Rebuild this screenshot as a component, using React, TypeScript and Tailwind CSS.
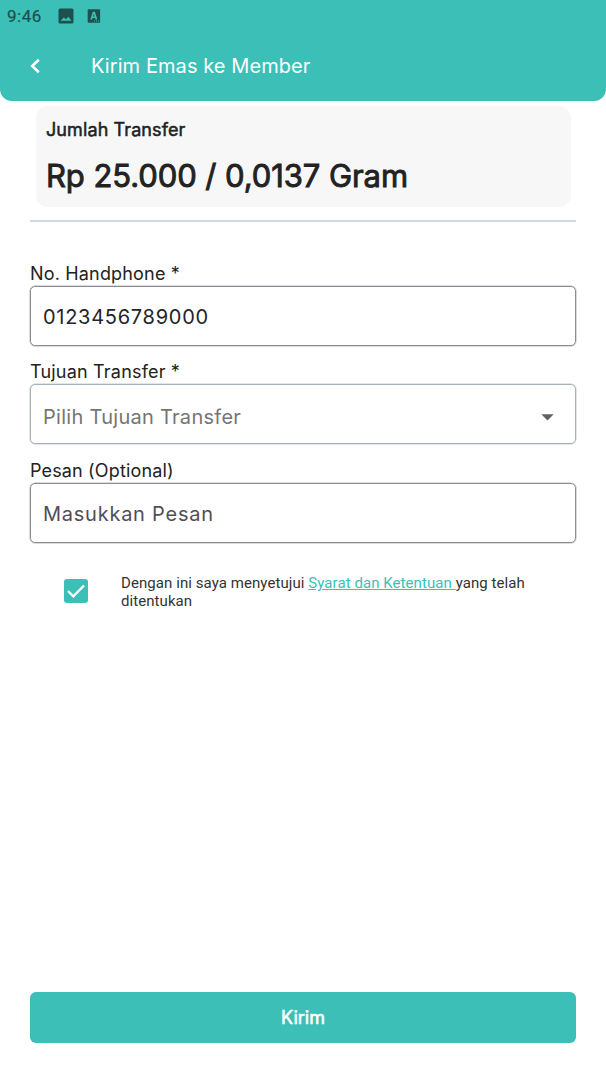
import { useState } from "react";

function StatusBar() {
  return (
    <div className="flex h-8 items-center pl-[7px] text-[#1c514e]">
      <span className="w-[37px] whitespace-nowrap font-['Roboto'] text-[17px] leading-8 tracking-[0.5px] [-webkit-text-stroke:0.2px]">
        9:46
      </span>
      <svg className="ml-[14px]" width="16" height="16" viewBox="0 0 16 16">
        <path
          fill="currentColor"
          fillRule="evenodd"
          d="M2 .5h12A1.500 1.500 0 0 1 15.500 2v12a1.500 1.500 0 0 1-1.500 1.500H2A1.500 1.500 0 0 1 .5 14V2A1.500 1.500 0 0 1 2 .5ZM2.600 12.800h10.800L10.300 8.800 8 11.300 5.800 9.600Z"
        />
      </svg>
      <svg className="ml-3" width="16" height="16" viewBox="0 0 16 16">
        <path
          fill="currentColor"
          fillRule="evenodd"
          d="M2.500 1.200h10.800a.8.8 0 0 1 .8.8v12a.8.8 0 0 1-.8.8H2.500a.8.8 0 0 1-.8-.8V2a.8.8 0 0 1 .8-.8ZM6.800 3.800 4.300 11.500h1.900l.5-1.600h2.300l.5 1.600h1.900L8.900 3.800ZM7.850 5.800l.7 2.600H7.150ZM8 12.500v1h1v-1ZM10 12.500v1h1v-1ZM12 12.500v1h1v-1Z"
        />
      </svg>
    </div>
  );
}

function Header() {
  return (
    <header className="h-[101px] rounded-b-xl bg-[#3bbfb7]">
      <StatusBar />
      <div className="flex h-[68px] items-center pl-[27px] text-white">
        <button type="button" aria-label="Kembali" className="h-4 w-4">
          <svg width="16" height="16" viewBox="0 0 16 16" fill="none" stroke="currentColor" strokeWidth="2.600">
            <path d="M11.800 1.800 5.200 8l6.600 6.200" />
          </svg>
        </button>
        <h1 className="ml-12 whitespace-nowrap text-[20px] tracking-[0.080px]">Kirim Emas ke Member</h1>
      </div>
    </header>
  );
}

export default function App() {
  const [agreed, setAgreed] = useState(true);
  return (
    <div className="flex h-[1078px] w-[606px] flex-col bg-white font-['Inter',sans-serif] text-[#222222]">
      <Header />
      <main className="flex flex-1 flex-col px-[30px]">
        <section className="mx-1.5 mt-[5px] h-[101px] w-[535px] rounded-xl bg-[#f7f7f7] px-[10px] pt-[13px]">
          <h2 className="text-[18px] leading-[22px] tracking-[0.1px] [-webkit-text-stroke:0.5px]">Jumlah Transfer</h2>
          <p className="mt-[15px] whitespace-nowrap text-[31px] leading-[40px] tracking-[-0.080px] [-webkit-text-stroke:0.9px]">
            Rp 25.000 / 0,0137 Gram
          </p>
        </section>
        <hr className="mt-[13px] border-t-2 border-[#cfdadd]" />

        <label className="mt-[40px] h-6 text-[18px] leading-6 tracking-[0.170px]" htmlFor="phone">
          No. Handphone *
        </label>
        <input
          id="phone"
          defaultValue="0123456789000"
          className="h-[60px] w-[546px] rounded-[5px] border border-[#8e8c95] px-3 pt-px text-[20px] tracking-[0.720px] text-[#252329] shadow-[0_0_0_0.5px_#b5b4ba] outline-none"
        />

        <span className="mt-[14px] h-6 text-[18px] leading-6 tracking-[0.190px]">Tujuan Transfer *</span>
        <button
          type="button"
          className="flex h-[60px] w-[546px] items-center justify-between rounded-[5px] border border-[#a7b2b7] pl-3 pr-[21px] pt-[6px] text-[20px] tracking-[0.280px] text-[#757575] shadow-[0_0_0_0.5px_#c5cdd0]"
        >
          Pilih Tujuan Transfer
          <svg width="13" height="7" viewBox="0 0 13 7">
            <path d="M.3.3h12.400L6.500 6.500Z" fill="#616161" />
          </svg>
        </button>

        <label className="mt-[14px] h-[25px] text-[18px] leading-[25px] tracking-[0.150px]" htmlFor="message">
          Pesan (Optional)
        </label>
        <input
          id="message"
          placeholder="Masukkan Pesan"
          className="h-[60px] w-[546px] rounded-[5px] border border-[#8e8c95] px-3 pt-px text-[20px] tracking-[0.750px] shadow-[0_0_0_0.5px_#b5b4ba] outline-none placeholder:text-[#514e57]"
        />

        <div className="mt-[31px] flex pl-[34px]">
          <button
            type="button"
            role="checkbox"
            aria-checked={agreed}
            aria-label="Setuju"
            onClick={() => setAgreed(!agreed)}
            className="mt-[5px] flex h-6 w-6 items-center justify-center rounded-[3px] bg-[#3bbfb7]"
          >
            {agreed && (
              <svg width="24" height="24" viewBox="0 0 24 24" fill="none" stroke="white" strokeWidth="2.400">
                <path d="m4 12 5.300 5.300L20 6.500" />
              </svg>
            )}
          </button>
          <p className="ml-[33px] whitespace-nowrap font-['Roboto'] text-[15px] leading-[18px] tracking-[0.070px] text-[#333333]">
            Dengan ini saya menyetujui{" "}
            <a className="whitespace-pre text-[#3bbfb7] underline">Syarat dan Ketentuan </a>
            yang telah
            <br />
            ditentukan
          </p>
        </div>

        <button
          type="button"
          className="mb-[35px] mt-auto h-[51px] w-[546px] rounded-md bg-[#3bbfb7] text-[18px] text-white [-webkit-text-stroke:0.6px]"
        >
          Kirim
        </button>
      </main>
    </div>
  );
}
